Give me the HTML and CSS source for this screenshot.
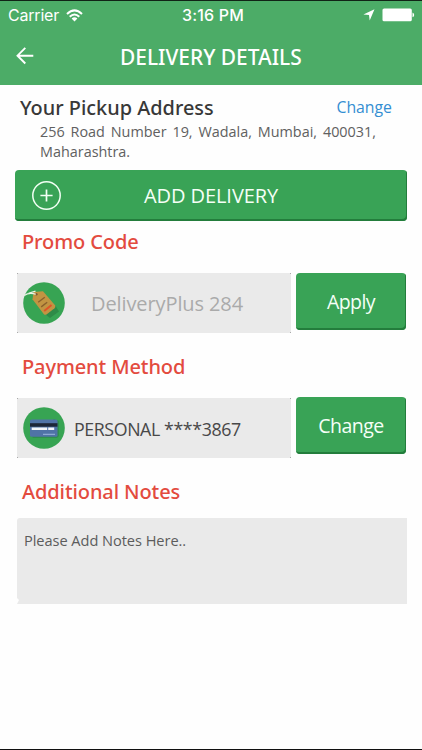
FILE: index.html
```html
<!DOCTYPE html>
<html lang="en">
<head>
<meta charset="utf-8">
<meta name="viewport" content="width=device-width, initial-scale=1">
<title>Delivery Details</title>
<link rel="stylesheet" href="styles.css">
</head>
<body>
<div class="screen">
  <header class="header">
    <div class="status">
      <div class="status-left">
        <span class="carrier">Carrier</span>
        <svg class="wifi" width="17" height="13" viewBox="0 0 17 13" fill="none" stroke="#fff" stroke-width="2">
          <path d="M1 5Q8.5-2.2 16 5M3.7 7.8Q8.5 3.2 13.3 7.8"/>
          <path d="M5.6 9.4Q8.5 7 11.4 9.4L8.5 12.4Z" fill="#fff" stroke="none"/>
        </svg>
      </div>
      <span class="clock">3:16 PM</span>
      <div class="status-right">
        <svg width="12" height="12" viewBox="0 0 12 12"><path d="M11.5.3 6.7 11.5 6 6.1.4 5.6Z" fill="#fff"/></svg>
        <svg width="33" height="14" viewBox="0 0 33 14"><rect x=".5" y=".5" width="29.3" height="12.8" rx="1.6" fill="#fff"/><path d="M30.5 4.5q1.7.6 1.7 2.4t-1.7 2.4Z" fill="#fff"/></svg>
      </div>
    </div>
    <nav class="nav">
      <svg class="back" width="18" height="18" viewBox="0 0 18 18" fill="none" stroke="#fff" stroke-width="1.9"><path d="M17.3 8.7H1.8M9.3.9 1.5 8.7 9.3 16.5"/></svg>
      <h1 class="title">DELIVERY DETAILS</h1>
    </nav>
  </header>
  <main class="content">
    <section class="pickup">
      <div class="pickup-head">
        <h2 class="pickup-title">Your Pickup Address</h2>
        <a class="change-link">Change</a>
      </div>
      <p class="address">256 Road Number 19, Wadala, Mumbai, 400031, Maharashtra.</p>
    </section>
    <button class="button add">
      <svg width="30" height="30" viewBox="0 0 30 30" fill="none" stroke="#f2fff4"><circle cx="15.5" cy="14.5" r="13.7" stroke-width="1.5"/><path d="M15.5 8.4v12.2M9.4 14.5h12.2" stroke-width="1.7"/></svg>
      <span class="add-label">ADD DELIVERY</span>
    </button>
    <h2 class="heading promo-heading">Promo Code</h2>
    <div class="row">
      <div class="field">
        <svg class="icon" width="42" height="42" viewBox="0 0 42 42">
          <circle cx="21" cy="21" r="20.8" fill="#37a453"/>
          <path d="M22 32 27 36 36 29.5 32 23Z" fill="#2e8b47"/>
          <path d="M10.5 10 20 9.2 32 23.2Q33 25 31.5 26.2L23.5 32.4Q22 33.3 20.7 31.9L9.5 17.2Z" fill="#c29442"/>
          <circle cx="13.4" cy="12.3" r="1.2" fill="#805c32"/>
          <path d="m15.2 20.3 6.6-5m-3.6 9.6 6-4.6" stroke="#8b602c" stroke-width="1.4"/>
          <path d="m21.2 29 7.3-6" stroke="#df5428" stroke-width="2"/>
          <path d="M1.2 13.5Q6 10 12.8 12.2M5.5 11.2l7-2.1" fill="none" stroke="#eef4e9" stroke-width="1.2"/>
        </svg>
        <span class="promo-value">DeliveryPlus 284</span>
      </div>
      <button class="button side"><span>Apply</span></button>
    </div>
    <h2 class="heading payment-heading">Payment Method</h2>
    <div class="row">
      <div class="field">
        <svg class="icon" width="42" height="42" viewBox="0 0 42 42">
          <circle cx="21" cy="21" r="20.8" fill="#37a453"/>
          <path d="M8 28 10 31H34L36 29V14L31 12Z" fill="#308f4d"/>
          <rect x="7" y="12.5" width="27.5" height="17.3" rx="1.6" fill="#5073a7"/>
          <path d="M7 16.2h27.5v3.5H7z" fill="#1d2637"/>
          <path d="M8.7 20.5h15.5v2.6H8.7zM25.2 20.5h6v2.6h-6z" fill="#f3f5f8"/>
          <path d="M20 27.3h12" stroke="#9bb8df"/>
        </svg>
        <span class="card-value">PERSONAL ****3867</span>
      </div>
      <button class="button side side-change"><span>Change</span></button>
    </div>
    <h2 class="heading notes-heading">Additional Notes</h2>
    <div class="notes"><span class="notes-text">Please Add Notes Here..</span></div>
  </main>
</div>
</body>
</html>
```
FILE: styles.css
```css
* { box-sizing: border-box; }
body { margin: 0; background: #fefefe; font-family: "Open Sans", "Noto Sans", sans-serif; }
h1, h2, p { margin: 0; font-weight: 500; }
h1, h2 { font-family: "Noto Sans", "Open Sans", sans-serif; }
svg { display: block; flex: none; }
span, h1, h2, a { white-space: nowrap; }
.screen { height: 750px; overflow: hidden; border-bottom: 1px solid #101010; }
.header { height: 85px; background: #4cac67; border-top: 1px solid #102316; color: #fff; }
.status { height: 28px; display: grid; grid-template-columns: 1fr auto 1fr; align-items: center; padding: 0 7px 0 8px; font-family: Inter, sans-serif; }
.status-left { display: flex; align-items: center; gap: 7px; }
.carrier { font-size: 16px; letter-spacing: -.2px; }
.clock { font-size: 16px; font-weight: 500; letter-spacing: .2px; padding-left: 3px; }
.status-right { display: flex; align-items: center; justify-content: flex-end; gap: 7px; }
.nav { height: 54px; display: grid; grid-template-columns: 104px auto; align-items: center; padding-left: 16px; }
.title { font-size: 20.9px; line-height: 28px; padding-top: 1px; }
.content { padding: 0 15px; }
.pickup { height: 85px; padding: 9px 15px 0 5px; }
.pickup-head { display: flex; justify-content: space-between; align-items: flex-start; height: 28px; line-height: 28px; }
.pickup-title { font-size: 19.9px; line-height: 27px; color: #383838; }
.change-link { font-size: 15.8px; line-height: 27px; color: #348ed2; }
.address { width: 336px; margin-left: 20px; font-size: 14.4px; font-weight: 400; line-height: 19.5px; color: #606060; text-align: justify; }
.button { border: 0; margin: 0; padding: 0; font-family: inherit; color: #f5fff6; background: #39a356; border-radius: 4px; box-shadow: inset -1px -2px 0 #237d3c; }
.add { width: 392px; height: 51px; display: flex; align-items: center; padding-left: 16px; font-size: 20px; letter-spacing: -.08px; }
.add-label { margin-left: 83px; }
.heading { padding-left: 7px; font-size: 20px; line-height: 28px; letter-spacing: -.1px; color: #e34b3e; }
.promo-heading { margin-top: 7px; height: 45px; }
.payment-heading { margin-top: 20px; height: 45px; }
.notes-heading { margin-top: 20px; height: 40px; }
.row { display: flex; gap: 5px; height: 60px; padding-left: 2px; }
.field { width: 274px; height: 60px; display: flex; align-items: center; padding-left: 6px; background: linear-gradient(#aaa, #aaa) 0 0/1px 1px, linear-gradient(#aaa, #aaa) 100% 0/1px 1px, linear-gradient(#aaa, #aaa) 0 100%/1px 1px, linear-gradient(#aaa, #aaa) 100% 100%/1px 1px, #eaeaea; background-repeat: no-repeat; }
.promo-value { margin-left: 26px; font-size: 20px; letter-spacing: -.1px; color: #aaa; }
.card-value { margin-left: 9px; padding-top: 1px; font-size: 17.8px; letter-spacing: -.4px; color: #484848; }
.side { width: 110px; height: 57px; font-size: 19.5px; letter-spacing: -.55px; }
.side-change { margin-top: -1px; }
.notes { width: 390px; height: 86px; margin-left: 2px; padding: 10px 7px; border-radius: 3px 0 0 0; background: #eaeaea; font-size: 14.6px; line-height: 24px; letter-spacing: -.05px; color: #5c5c5c; clip-path: polygon(0 0, 100% 0, 100% 100%, 0 100%, 2px 82px, 0 80px); }
```
